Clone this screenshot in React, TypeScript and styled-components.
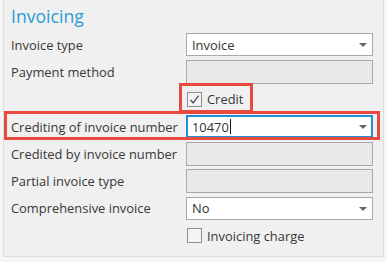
import React from "react";
import styled, { createGlobalStyle, css } from "styled-components";

const GlobalStyle = createGlobalStyle`
  html, body { margin: 0; padding: 0; }
  body {
    background: #f6f6f6;
    font-family: "Open Sans", "Noto Sans", Arial, sans-serif;
    -webkit-font-smoothing: antialiased;
  }
`;

const Panel = styled.section`
  box-sizing: border-box;
  margin-left: 3px;
  width: 381px;
  height: 257px;
  background: #f0f0f0;
  border: 1px solid #dedede;
  border-top: none;
  padding: 0 10px 0 7px;
`;

const Title = styled.h2`
  margin: 0;
  height: 31px;
  display: flex;
  align-items: center;
  font-weight: 400;
  font-size: 17.6px;
  color: #2a9bd8;
`;

const Form = styled.div`
  display: flex;
  flex-direction: column;
`;

const Row = styled.div<{ $highlight?: boolean }>`
  position: relative;
  display: grid;
  grid-template-columns: 175px 187px;
  align-items: center;
  height: 27.3px;
  ${(p) =>
    p.$highlight &&
    css`
      &::after {
        content: "";
        position: absolute;
        left: -7px;
        right: -7px;
        top: -1.5px;
        bottom: 0px;
        border: 3px solid #e84a3f;
        pointer-events: none;
      }
    `}
`;

const Label = styled.span`
  font-size: 12.9px;
  color: #383838;
  white-space: nowrap;
`;

const Field = styled.div<{ $disabled?: boolean; $focused?: boolean }>`
  box-sizing: border-box;
  height: 23.5px;
  display: flex;
  align-items: center;
  padding: 0 5px 0 5px;
  background: ${(p) => (p.$disabled ? "#e9e9e9" : "#ffffff")};
  border: 1px solid ${(p) => (p.$focused ? "#1f8fd8" : "#a9a9a9")};
  ${(p) =>
    p.$focused &&
    css`
      box-shadow: inset 0 0 0 1px #1f8fd8;
    `}
  font-size: 12.9px;
  color: #333;
`;

const Value = styled.span`
  flex: 1;
  display: flex;
  align-items: center;
`;

const Caret = styled.span`
  display: inline-block;
  width: 1px;
  height: 15px;
  background: #111;
  margin-left: 1px;
`;

const Arrow = styled.span`
  width: 0;
  height: 0;
  border-left: 4px solid transparent;
  border-right: 4px solid transparent;
  border-top: 4px solid #666;
  margin-top: 1px;
`;

const CheckWrap = styled.label<{ $highlight?: boolean }>`
  position: relative;
  display: inline-flex;
  align-items: center;
  justify-self: start;
  gap: 5px;
  margin-left: 1px;
  font-size: 12.9px;
  color: #383838;
  ${(p) =>
    p.$highlight &&
    css`
      &::after {
        content: "";
        position: absolute;
        left: -8px;
        right: -10px;
        top: -7px;
        bottom: -5px;
        border: 3px solid #e84a3f;
        pointer-events: none;
      }
    `}
`;

const Box = styled.span`
  box-sizing: border-box;
  width: 15px;
  height: 15px;
  border: 1px solid #8f8f8f;
  background: #f4f4f4;
  display: flex;
  align-items: center;
  justify-content: center;
`;

const Check = () => (
  <svg width="11" height="11" viewBox="0 0 11 11">
    <path d="M1.5 6 L4.2 8.8 L9.6 1.6" fill="none" stroke="#555" strokeWidth="1.4" />
  </svg>
);

export default function App() {
  return (
    <>
      <GlobalStyle />
      <Panel>
        <Title>Invoicing</Title>
        <Form>
          <Row>
            <Label>Invoice type</Label>
            <Field>
              <Value>Invoice</Value>
              <Arrow />
            </Field>
          </Row>
          <Row>
            <Label>Payment method</Label>
            <Field $disabled />
          </Row>
          <Row>
            <span />
            <CheckWrap $highlight>
              <Box>
                <Check />
              </Box>
              Credit
            </CheckWrap>
          </Row>
          <Row $highlight>
            <Label>Crediting of invoice number</Label>
            <Field $focused>
              <Value>
                10470
                <Caret />
              </Value>
              <Arrow />
            </Field>
          </Row>
          <Row>
            <Label>Credited by invoice number</Label>
            <Field $disabled />
          </Row>
          <Row>
            <Label>Partial invoice type</Label>
            <Field $disabled />
          </Row>
          <Row>
            <Label>Comprehensive invoice</Label>
            <Field>
              <Value>No</Value>
              <Arrow />
            </Field>
          </Row>
          <Row>
            <span />
            <CheckWrap>
              <Box />
              Invoicing charge
            </CheckWrap>
          </Row>
        </Form>
      </Panel>
    </>
  );
}
